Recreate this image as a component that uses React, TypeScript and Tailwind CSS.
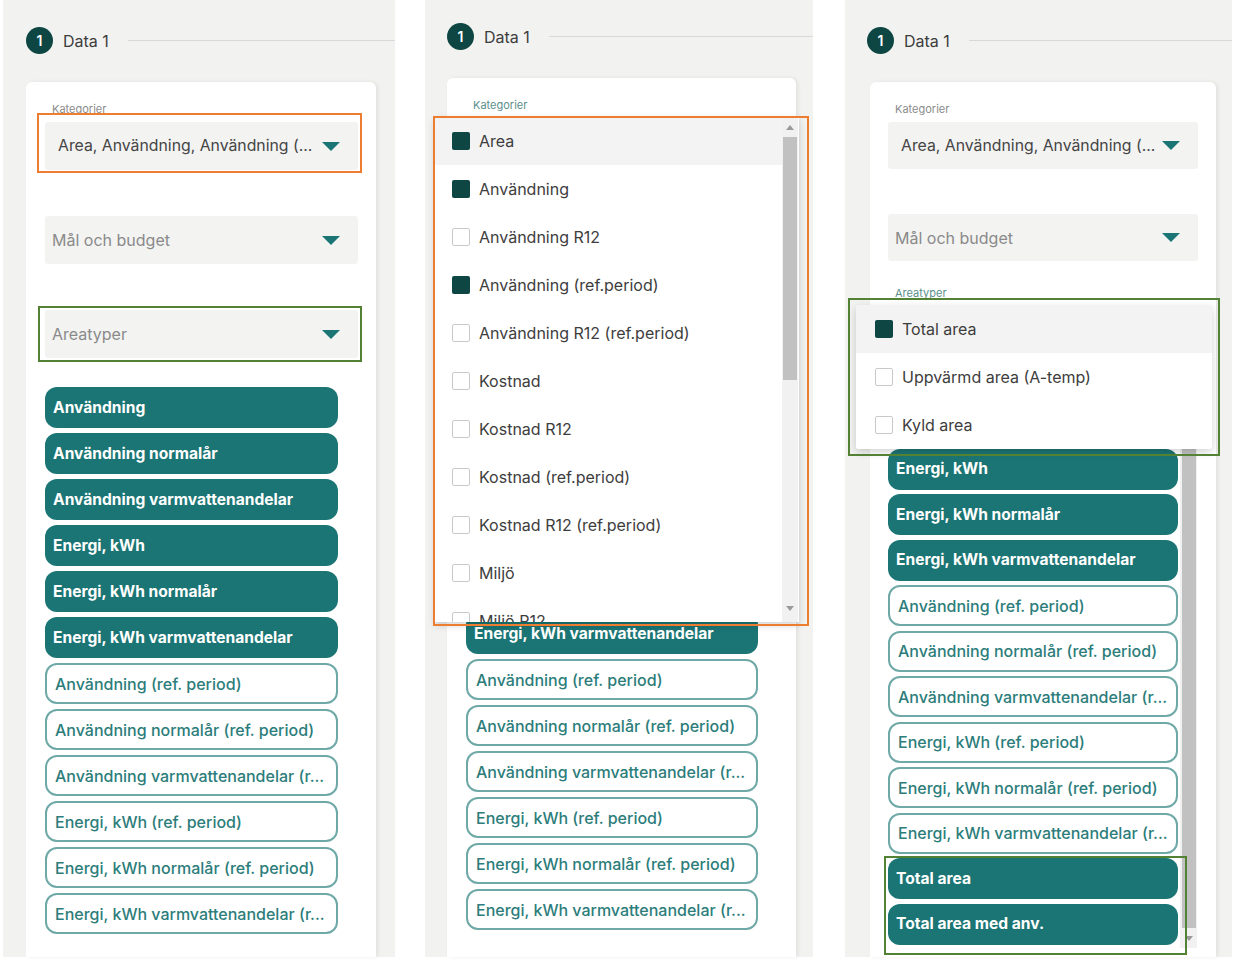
import React from "react";

const filledChips = [
  "Användning",
  "Användning normalår",
  "Användning varmvattenandelar",
  "Energi, kWh",
  "Energi, kWh normalår",
  "Energi, kWh varmvattenandelar",
];

const outlinedChips = [
  "Användning (ref. period)",
  "Användning normalår (ref. period)",
  "Användning varmvattenandelar (r...",
  "Energi, kWh (ref. period)",
  "Energi, kWh normalår (ref. period)",
  "Energi, kWh varmvattenandelar (r...",
];

const categories = [
  { label: "Area", checked: true },
  { label: "Användning", checked: true },
  { label: "Användning R12", checked: false },
  { label: "Användning (ref.period)", checked: true },
  { label: "Användning R12 (ref.period)", checked: false },
  { label: "Kostnad", checked: false },
  { label: "Kostnad R12", checked: false },
  { label: "Kostnad (ref.period)", checked: false },
  { label: "Kostnad R12 (ref.period)", checked: false },
  { label: "Miljö", checked: false },
  { label: "Miljö R12", checked: false },
];

const areaTypes = [
  { label: "Total area", checked: true },
  { label: "Uppvärmd area (A-temp)", checked: false },
  { label: "Kyld area", checked: false },
];

function Caret() {
  return (
    <svg width="18" height="9" viewBox="0 0 18 9" className="shrink-0">
      <path d="M0 0h18L9 9z" fill="#1b7574" />
    </svg>
  );
}

function Header() {
  return (
    <div className="flex h-[27px] items-center">
      <div className="flex h-[27px] w-[27px] shrink-0 items-center justify-center rounded-full bg-[#0e4643] text-[14px] font-semibold text-white">
        1
      </div>
      <span className="ml-[10px] text-[16px] text-[#3d3d3d]">Data 1</span>
      <div className="ml-[19px] h-px flex-1 bg-[#d9d9d9]" />
    </div>
  );
}

interface FieldProps {
  label?: string;
  value?: string;
  placeholder?: string;
  focused?: boolean;
  tall?: boolean;
}

function Field({ label, value, placeholder, focused, tall = true }: FieldProps) {
  return (
    <div className="flex flex-col">
      <div
        className={`h-[14px] pl-[7px] text-[11px] leading-[14px] ${focused ? "text-[#5b8f8c]" : "text-[#8c8c8c]"}`}
      >
        {label}
      </div>
      <div
        className={`mt-[6px] flex items-center justify-between rounded-[3px] bg-[#f3f3f2] pr-[18px] ${value ? "pl-[13px]" : "pl-[7px]"} ${tall ? "h-[48px]" : "h-[47px]"}`}
      >
        {value ? (
          <span className="whitespace-nowrap text-[15.8px] text-[#454545]">{value}</span>
        ) : (
          <span className="whitespace-nowrap text-[16px] text-[#8a8a8a]">{placeholder}</span>
        )}
        <Caret />
      </div>
    </div>
  );
}

function Chip({ text, solid }: { text: string; solid?: boolean }) {
  if (solid) {
    return (
      <div className="flex h-[41px] shrink-0 items-center whitespace-nowrap rounded-[12px] bg-[#1b7574] px-[8px] text-[15.6px] font-bold text-white">
        {text}
      </div>
    );
  }
  return (
    <div className="flex h-[41px] shrink-0 items-center whitespace-nowrap rounded-[12px] border-2 border-[#6ea9a7] bg-white px-[8px] text-[16px] font-medium text-[#2c7d7b]">
      {text}
    </div>
  );
}

function CheckItem({ label, checked, highlight, pad }: { label: string; checked: boolean; highlight?: boolean; pad: string }) {
  return (
    <div className={`flex h-[48px] shrink-0 items-center ${pad} ${highlight ? "bg-[#f3f3f3]" : "bg-white"}`}>
      {checked ? (
        <div className="h-[18px] w-[18px] shrink-0 rounded-[2px] bg-[#0e4643]" />
      ) : (
        <div className="h-[18px] w-[18px] shrink-0 rounded-[2px] border-[1.5px] border-[#c9c9c9] bg-white" />
      )}
      <span className="ml-[9px] whitespace-nowrap text-[16px] text-[#3d3d3d]">{label}</span>
    </div>
  );
}

function ScrollArrow({ up }: { up?: boolean }) {
  return (
    <svg width="8" height="5" viewBox="0 0 8 5">
      <path d={up ? "M0 5h8L4 0z" : "M0 0h8L4 5z"} fill="#9a9a9a" />
    </svg>
  );
}

function Box({ className }: { className: string }) {
  return <div className={`pointer-events-none absolute ${className}`} />;
}

function PanelOne() {
  return (
    <div className="relative flex h-[957px] w-[392px] shrink-0 flex-col bg-[#f2f2f1] pl-[23px] pt-[27px]">
      <Header />
      <div className="mt-[28px] flex w-[350px] flex-1 flex-col rounded-t-[6px] bg-white pl-[19px] pt-[20px] shadow-[2px_0_4px_rgba(0,0,0,0.07)]">
        <div className="flex w-[313px] flex-col gap-[26px]">
          <Field label="Kategorier" value="Area, Användning, Användning (..." />
          <Field placeholder="Mål och budget" />
          <Field placeholder="Areatyper" />
        </div>
        <div className="mt-[29px] flex w-[293px] flex-col gap-[5px]">
          {filledChips.map((c) => (
            <Chip key={c} text={c} solid />
          ))}
          {outlinedChips.map((c) => (
            <Chip key={c} text={c} />
          ))}
        </div>
      </div>
      <Box className="left-[34px] top-[113px] h-[60px] w-[325px] border-2 border-[#ed7d31]" />
      <Box className="left-[35px] top-[306px] h-[56px] w-[324px] border-2 border-[#548235]" />
    </div>
  );
}

function PanelTwo() {
  return (
    <div className="relative flex h-[957px] w-[388px] shrink-0 flex-col bg-[#f2f2f1] pl-[22px] pt-[23px]">
      <Header />
      <div className="mt-[28px] flex w-[349px] flex-1 flex-col rounded-t-[6px] bg-white pl-[19px] pt-[20px] shadow-[2px_0_4px_rgba(0,0,0,0.07)]">
        <div className="flex w-[311px] flex-col gap-[26px]">
          <Field label="Kategorier" value="Area, Användning, Användning (..." focused />
          <Field placeholder="Mål och budget" />
          <Field placeholder="Areatyper" />
        </div>
        <div className="mt-[29px] flex w-[292px] flex-col gap-[5px]">
          {filledChips.map((c) => (
            <Chip key={c} text={c} solid />
          ))}
          {outlinedChips.map((c) => (
            <Chip key={c} text={c} />
          ))}
        </div>
      </div>

      {/* open category menu */}
      <div className="absolute left-[10px] top-[117px] flex h-[505px] w-[364px] overflow-hidden bg-white shadow-[0_3px_8px_rgba(0,0,0,0.18)]">
        <div className="flex flex-1 flex-col">
          {categories.map((c, i) => (
            <CheckItem key={c.label} label={c.label} checked={c.checked} highlight={i === 0} pad="pl-[17px]" />
          ))}
        </div>
        <div className="mr-[1px] flex w-[16px] flex-col items-center bg-[#f1f1f1]">
          <div className="flex h-[20px] items-center justify-center">
            <ScrollArrow up />
          </div>
          <div className="h-[243px] w-[14px] bg-[#c1c1c1]" />
          <div className="flex-1" />
          <div className="flex h-[24px] items-center justify-center pb-[4px]">
            <ScrollArrow />
          </div>
        </div>
      </div>
      <Box className="left-[8px] top-[116px] h-[510px] w-[376px] border-2 border-[#ed7d31]" />
    </div>
  );
}

function PanelThree() {
  return (
    <div className="relative flex h-[957px] w-[387px] shrink-0 flex-col bg-[#f2f2f1] pl-[22px] pt-[27px]">
      <Header />
      <div className="ml-[3px] mt-[28px] flex w-[346px] flex-1 flex-col rounded-t-[6px] bg-white pl-[18px] pt-[20px] shadow-[2px_0_4px_rgba(0,0,0,0.07)]">
        <div className="flex w-[310px] flex-col gap-[25px]">
          <Field label="Kategorier" value="Area, Användning, Användning (..." tall={false} />
          <Field placeholder="Mål och budget" tall={false} />
          <Field label="Areatyper" value="Total area" focused tall={false} />
        </div>
        <div className="mt-[29px] flex h-[566px] w-[309px] overflow-hidden">
          <div className="-mt-[70px] flex w-[290px] shrink-0 flex-col gap-[4.5px]">
            {filledChips.map((c) => (
              <Chip key={c} text={c} solid />
            ))}
            {outlinedChips.map((c) => (
              <Chip key={c} text={c} />
            ))}
            <Chip text="Total area" solid />
            <Chip text="Total area med anv." solid />
          </div>
          <div className="ml-[2px] flex w-[17px] flex-col items-center bg-[#f1f1f1] pt-[17px]">
            <div className="w-[14px] flex-1 bg-[#c1c1c1]" />
            <div className="flex h-[20px] items-center justify-center">
              <ScrollArrow />
            </div>
          </div>
        </div>
      </div>

      {/* open area-type menu */}
      <div className="absolute left-[11px] top-[305px] flex h-[144px] w-[356px] flex-col overflow-hidden rounded-[3px] bg-white shadow-[0_3px_8px_rgba(0,0,0,0.18)]">
        {areaTypes.map((a, i) => (
          <CheckItem key={a.label} label={a.label} checked={a.checked} highlight={i === 0} pad="pl-[19px]" />
        ))}
      </div>
      <Box className="left-[3px] top-[298px] h-[158px] w-[372px] border-2 border-[#548235]" />
      <Box className="left-[39px] top-[856px] h-[99px] w-[303px] border-2 border-[#548235]" />
    </div>
  );
}

export default function App() {
  return (
    <div className="flex h-[967px] w-[1242px] bg-white pl-[3px] font-['Inter','Liberation_Sans',sans-serif]">
      <PanelOne />
      <div className="w-[30px] shrink-0" />
      <PanelTwo />
      <div className="w-[32px] shrink-0" />
      <PanelThree />
    </div>
  );
}
